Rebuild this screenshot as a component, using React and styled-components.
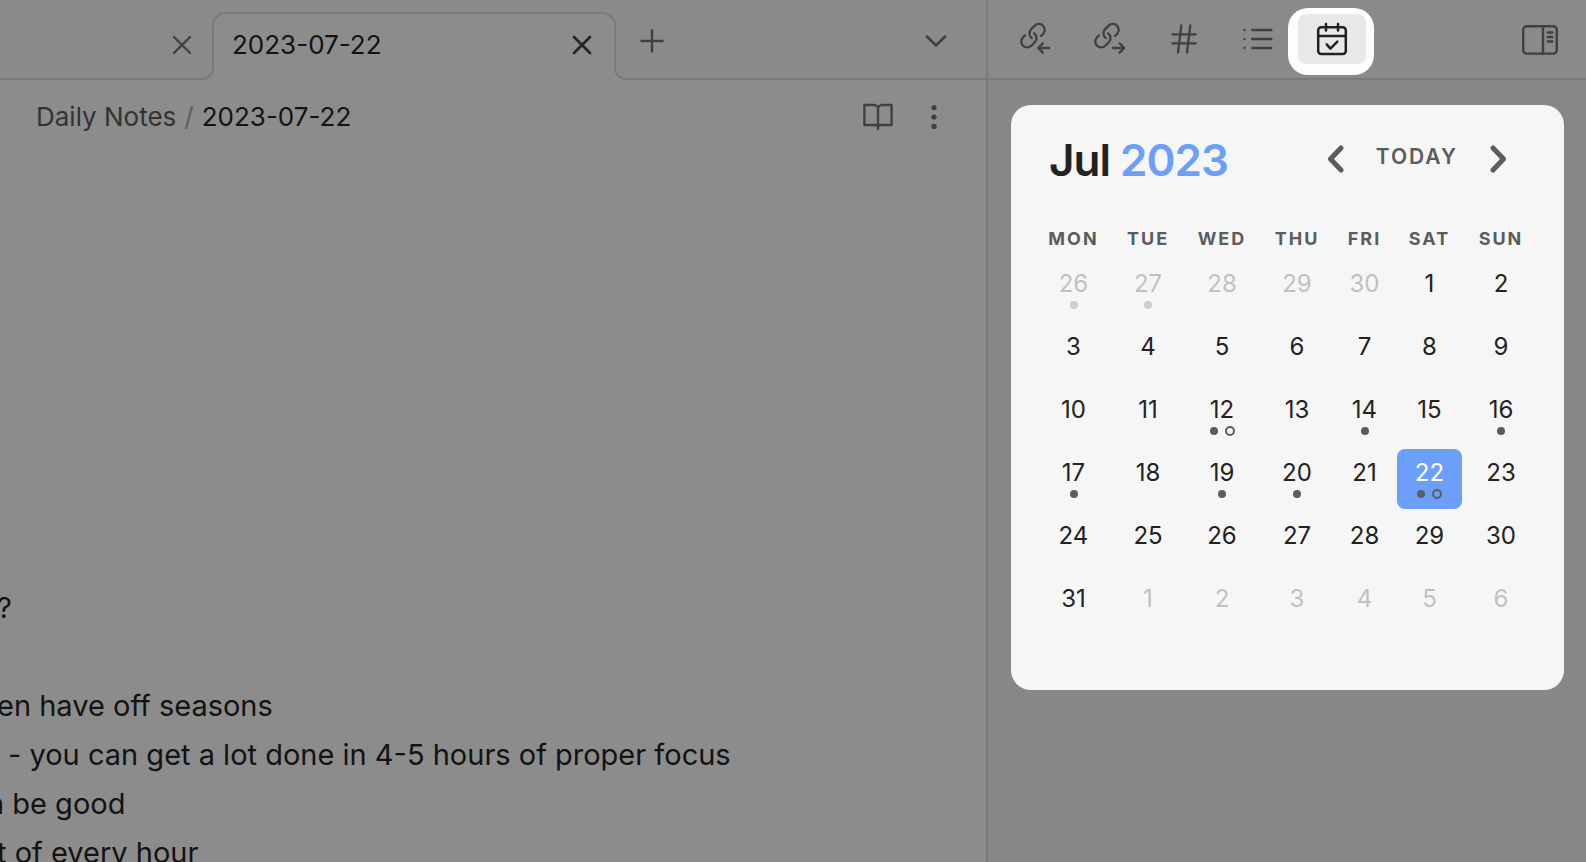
import React from "react";
import styled, { createGlobalStyle } from "styled-components";

const color = {
  bar: "#8a8a8a",
  page: "#8c8c8c",
  side: "#878787",
  line: "#7b7b7b",
  text: "#131313",
  icon: "#404040",
  card: "#f6f6f6",
  ink: "#222222",
  muted: "#5c5c5c",
  blue: "#6b9ff9",
};

const GlobalStyle = createGlobalStyle`
  *, *::before, *::after { box-sizing: border-box; }
  body {
    margin: 0;
    font-family: Inter, "Liberation Sans", sans-serif;
    color: ${color.text};
    background: ${color.page};
  }
  button {
    margin: 0;
    padding: 0;
    border: 0;
    background: none;
    font: inherit;
    color: inherit;
    cursor: pointer;
  }
  svg { display: block; fill: none; stroke: currentColor; stroke-linecap: round; stroke-linejoin: round; }
`;

const Workspace = styled.div`
  display: flex;
  height: 100vh;
  overflow: hidden;
`;

const Editor = styled.main`
  flex: 1;
  min-width: 0;
  display: flex;
  flex-direction: column;
  overflow: hidden;
`;

const TabBar = styled.div`
  flex: none;
  display: flex;
  align-items: flex-end;
  height: 80px;
  background: ${color.bar};
  border-bottom: 2px solid ${color.line};
`;

const Tab = styled.div`
  flex: none;
  display: flex;
  align-items: center;
  justify-content: space-between;
  height: 66px;
  width: 212px;
  padding: 0 14px 0 18px;
  font-size: 26px;
  line-height: 32px;
  color: #333333;
`;

const ActiveTab = styled(Tab)`
  position: relative;
  width: 404px;
  height: 68px;
  margin-bottom: -2px;
  padding: 0 16px 4px 18px;
  color: ${color.text};
  background: ${color.page};
  border: 2px solid ${color.line};
  border-bottom: 0;
  border-radius: 14px 14px 0 0;

  &::before,
  &::after {
    content: "";
    position: absolute;
    bottom: 0;
    width: 12px;
    height: 12px;
    background: ${color.bar};
    border-bottom: 2px solid ${color.line};
    box-shadow: 0 0 0 8px ${color.page};
    clip-path: inset(0);
  }
  &::before {
    right: 100%;
    border-right: 2px solid ${color.line};
    border-bottom-right-radius: 12px;
  }
  &::after {
    left: 100%;
    border-left: 2px solid ${color.line};
    border-bottom-left-radius: 12px;
  }
`;

const IconButton = styled.button`
  display: flex;
  align-items: center;
  justify-content: center;
  color: ${(p) => (p.$strong ? "#262626" : color.icon)};
`;

const BarActions = styled.div`
  flex: 1;
  display: flex;
  align-items: center;
  justify-content: space-between;
  height: 74px;
  padding: 0 32px 0 18px;
`;

const ViewHeader = styled.header`
  flex: none;
  display: flex;
  align-items: center;
  justify-content: space-between;
  height: 74px;
  padding: 0 36px;
`;

const Breadcrumb = styled.nav`
  display: flex;
  gap: 8px;
  font-size: 26px;
  line-height: 32px;
  a { color: #333333; text-decoration: none; }
  i { font-style: normal; color: #5e5e5e; }
`;

const ViewActions = styled.div`
  display: flex;
  gap: 24px;
`;

const Note = styled.article`
  padding-top: 429px;
  font-size: 29px;
  line-height: 49px;
`;

const Line = styled.p`
  margin: 0;
  min-height: 49px;
  white-space: pre;
  text-indent: ${(p) => p.$start}px;
`;

const Sidebar = styled.aside`
  flex: none;
  width: 600px;
  border-left: 2px solid ${color.line};
  background: ${color.side};
`;

const SideBar = styled.div`
  display: flex;
  justify-content: space-between;
  height: 80px;
  padding: 14px 12px 0 14px;
  background: ${color.bar};
  border-bottom: 2px solid ${color.line};
`;

const SideTabs = styled.div`
  display: flex;
  gap: 6px;
`;

const SideButton = styled(IconButton)`
  width: 68px;
  height: 50px;
  border-radius: 8px;
`;

const SelectedSideButton = styled(SideButton)`
  position: relative;
  z-index: 0;
  color: ${color.ink};

  &::before,
  &::after {
    content: "";
    position: absolute;
    z-index: -1;
  }
  &::before {
    inset: -6px -8px -11px -10px;
    border-radius: 20px;
    background: #fdfdfd;
  }
  &::after {
    inset: 0;
    border-radius: 8px;
    background: #e9e9e9;
  }
`;

const Card = styled.section`
  margin: 25px 22px 0 23px;
  padding: 27px 24px 52px 22px;
  border-radius: 20px;
  background: ${color.card};
  color: ${color.ink};
`;

const CardHeader = styled.header`
  display: flex;
  align-items: center;
  justify-content: space-between;
  padding: 0 32px 0 16px;
`;

const Title = styled.h2`
  margin: 0;
  font-size: 44px;
  line-height: 56px;
  font-weight: 600;
  letter-spacing: -1px;
  span { color: ${color.blue}; }
`;

const MonthNav = styled.div`
  display: flex;
  align-items: center;
  gap: 32px;
  padding-bottom: 2px;
  color: ${color.muted};
  ${IconButton} { color: inherit; }
`;

const TodayButton = styled.button`
  padding-bottom: 4px;
  font-size: 21px;
  line-height: 26px;
  font-weight: 600;
  letter-spacing: 2px;
`;

const Month = styled.table`
  width: 100%;
  margin-top: 28px;
  table-layout: fixed;
  border-collapse: collapse;
`;

const WeekdayCell = styled.th`
  height: 44px;
  padding: 0;
  font-size: 18px;
  font-weight: 700;
  letter-spacing: 2px;
  text-align: center;
  white-space: nowrap;
  color: ${color.muted};
`;

const DayCell = styled.td`
  height: 63px;
  padding: 0 0 3px;
`;

const DayButton = styled.button`
  display: flex;
  flex-direction: column;
  align-items: center;
  width: 100%;
  height: 60px;
  padding-top: 9px;
  border-radius: 8px;
  font-size: 24px;
  line-height: 30px;
  opacity: ${(p) => (p.$faded ? 0.25 : 1)};
  background: ${(p) => (p.$selected ? color.blue : "transparent")};
  color: ${(p) => (p.$selected ? "#ffffff" : color.ink)};
`;

const Dots = styled.span`
  display: flex;
  align-items: center;
  gap: 7px;
  height: 12px;
`;

const Dot = styled.span`
  width: 8px;
  height: 8px;
  border-radius: 50%;
  background: ${color.muted};
`;

const Ring = styled.span`
  width: 10px;
  height: 10px;
  border-radius: 50%;
  border: 2px solid ${color.muted};
`;

const CloseIcon = ({ stroke }) => (
  <svg width="32" height="32" viewBox="0 0 32 32" strokeWidth={stroke}>
    <path d="M8 8l16 16M24 8L8 24" />
  </svg>
);

const PlusIcon = () => (
  <svg width="36" height="36" viewBox="0 0 36 36" strokeWidth="2.4">
    <path d="M18 7.5v21M7.5 18h21" />
  </svg>
);

const ChevronDownIcon = () => (
  <svg width="36" height="36" viewBox="0 0 36 36" strokeWidth="2.5">
    <path d="M9 13.5l9 9 9-9" />
  </svg>
);

const BookIcon = () => (
  <svg width="32" height="32" viewBox="0 0 24 24" strokeWidth="1.75">
    <path d="M12 6a3 3 0 0 0-3-3H1.8v15H10a2 2 0 0 1 2 2.6M12 6a3 3 0 0 1 3-3h7.2v15H14a2 2 0 0 0-2 2.6M12 6v15" />
  </svg>
);

const MoreIcon = () => (
  <svg width="32" height="32" viewBox="0 0 32 32" strokeWidth="2.6">
    <circle cx="16" cy="6.6" r="1.3" />
    <circle cx="16" cy="16" r="1.3" />
    <circle cx="16" cy="25.4" r="1.3" />
  </svg>
);

const LinkIcon = ({ arrow }) => (
  <svg width="32" height="34" viewBox="0 0 32 34" strokeWidth="2.3">
    <g transform="translate(-1.16 -0.46) scale(1.18)" strokeWidth="1.95">
      <path d="M11 14a5 5 0 0 1-.54-7.54l3-3a5 5 0 0 1 7.07 7.07l-1.71 1.72" />
      <path d="M13 10a5 5 0 0 1 .54 7.54l-3 3a5 5 0 0 1-7.07-7.07l1.71-1.71" />
    </g>
    <path d={arrow} />
  </svg>
);

const HashIcon = () => (
  <svg width="28" height="32" viewBox="0 0 28 32" strokeWidth="2.3">
    <path d="M2.5 11.3h23.3M2.5 20.3h23.3M11.3 2.5L8 29.5M20.3 2.5L17 29.5" />
  </svg>
);

const ListIcon = () => (
  <svg width="32" height="24" viewBox="0 0 32 24" strokeWidth="2.3">
    <path d="M2.5 3h.01M2.5 12h.01M2.5 21h.01M10.2 3h19.2M10.2 12h19.2M10.2 21h19.2" />
  </svg>
);

const CalendarIcon = () => (
  <svg width="32" height="34" viewBox="0 0 32 34" strokeWidth="2.5">
    <rect x="2.2" y="5.2" width="27.6" height="26.8" rx="3" />
    <path d="M2.2 14h27.6M10 2v6.4M22 2v6.4M10.7 22.4l3.7 4.2 6.9-7" />
  </svg>
);

const PanelIcon = () => (
  <svg width="38" height="32" viewBox="0 0 38 32" strokeWidth="2.4">
    <rect x="2.2" y="3.2" width="33.6" height="27.4" rx="3.5" />
    <path d="M22 3.2v27.4M26.7 9.5h4.6M26.7 14h4.6M26.7 18.5h4.6" />
  </svg>
);

const MonthArrow = ({ d }) => (
  <svg width="18" height="28" viewBox="0 0 18 28" strokeWidth="5" strokeLinejoin="miter">
    <path d={d} />
  </svg>
);

const weekdays = [
  ["MON", 81],
  ["TUE", 68],
  ["WED", 80],
  ["THU", 70],
  ["FRI", 65],
  ["SAT", 65],
  ["SUN", 78],
];

const previousMarks = { 26: ["dot"], 27: ["dot"] };

const marks = {
  12: ["dot", "ring"],
  14: ["dot"],
  16: ["dot"],
  17: ["dot"],
  19: ["dot"],
  20: ["dot"],
  22: ["dot", "ring"],
};

const days = [
  ...[26, 27, 28, 29, 30].map((n) => ({ n, faded: true, marks: previousMarks[n] })),
  ...Array.from({ length: 31 }, (_, i) => ({ n: i + 1, marks: marks[i + 1], selected: i + 1 === 22 })),
  ...[1, 2, 3, 4, 5, 6].map((n) => ({ n, faded: true })),
];

const weeks = Array.from({ length: 6 }, (_, w) => days.slice(w * 7, w * 7 + 7));

const lines = [
  ["?", -3],
  ["", 0],
  ["en have off seasons", -3],
  ["- you can get a lot done in 4-5 hours of proper focus", 8],
  ["n be good", -13],
  ["t of every hour", -3],
];

export default function App() {
  return (
    <Workspace>
      <GlobalStyle />
      <Editor>
        <TabBar>
          <Tab>
            <span />
            <IconButton aria-label="Close tab">
              <CloseIcon stroke="2.3" />
            </IconButton>
          </Tab>
          <ActiveTab>
            <span>2023-07-22</span>
            <IconButton $strong aria-label="Close tab">
              <CloseIcon stroke="2.7" />
            </IconButton>
          </ActiveTab>
          <BarActions>
            <IconButton aria-label="New tab">
              <PlusIcon />
            </IconButton>
            <IconButton aria-label="Tab list">
              <ChevronDownIcon />
            </IconButton>
          </BarActions>
        </TabBar>
        <ViewHeader>
          <Breadcrumb aria-label="Breadcrumb">
            <a href="#daily-notes">Daily Notes</a>
            <i>/</i>
            <span>2023-07-22</span>
          </Breadcrumb>
          <ViewActions>
            <IconButton aria-label="Reading view">
              <BookIcon />
            </IconButton>
            <IconButton aria-label="More options">
              <MoreIcon />
            </IconButton>
          </ViewActions>
        </ViewHeader>
        <Note>
          {lines.map(([text, start], i) => (
            <Line key={i} $start={start}>
              {text}
            </Line>
          ))}
        </Note>
      </Editor>
      <Sidebar>
        <SideBar>
          <SideTabs>
            <SideButton aria-label="Backlinks">
              <LinkIcon arrow="M29.3 26H18.2M22.8 21.4L18.2 26l4.6 4.6" />
            </SideButton>
            <SideButton aria-label="Outgoing links">
              <LinkIcon arrow="M18.8 26h11.1M25.6 21.4l4.6 4.6-4.6 4.6" />
            </SideButton>
            <SideButton aria-label="Tags">
              <HashIcon />
            </SideButton>
            <SideButton aria-label="Outline">
              <ListIcon />
            </SideButton>
            <SelectedSideButton aria-label="Calendar" aria-pressed="true">
              <CalendarIcon />
            </SelectedSideButton>
          </SideTabs>
          <SideButton aria-label="Toggle sidebar">
            <PanelIcon />
          </SideButton>
        </SideBar>
        <Card>
          <CardHeader>
            <Title>
              Jul <span>2023</span>
            </Title>
            <MonthNav>
              <IconButton aria-label="Previous month">
                <MonthArrow d="M15 3L4.5 14 15 25" />
              </IconButton>
              <TodayButton>TODAY</TodayButton>
              <IconButton aria-label="Next month">
                <MonthArrow d="M3 3l10.5 11L3 25" />
              </IconButton>
            </MonthNav>
          </CardHeader>
          <Month>
            <colgroup>
              {weekdays.map(([name, width]) => (
                <col key={name} width={width} />
              ))}
            </colgroup>
            <thead>
              <tr>
                {weekdays.map(([name]) => (
                  <WeekdayCell key={name} scope="col">
                    {name}
                  </WeekdayCell>
                ))}
              </tr>
            </thead>
            <tbody>
              {weeks.map((week, w) => (
                <tr key={w}>
                  {week.map((day, i) => (
                    <DayCell key={i}>
                      <DayButton $faded={day.faded} $selected={day.selected}>
                        {day.n}
                        {day.marks && (
                          <Dots>{day.marks.map((m) => (m === "dot" ? <Dot key={m} /> : <Ring key={m} />))}</Dots>
                        )}
                      </DayButton>
                    </DayCell>
                  ))}
                </tr>
              ))}
            </tbody>
          </Month>
        </Card>
      </Sidebar>
    </Workspace>
  );
}
